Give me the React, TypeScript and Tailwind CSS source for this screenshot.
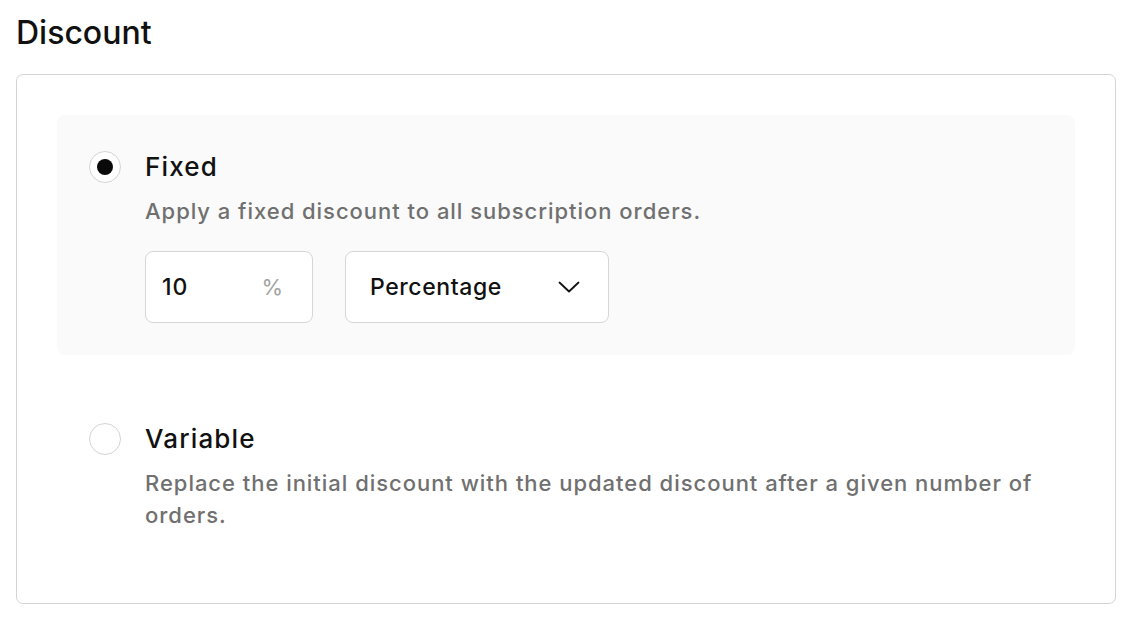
import { useState } from "react"

const font = { fontFamily: "Inter, 'Noto Sans', sans-serif" }

function Radio({ checked }: { checked: boolean }) {
  return (
    <div className="flex h-10 w-8 shrink-0 items-center">
      <div className="flex h-8 w-8 items-center justify-center rounded-full border border-[#d4d4d4] bg-white">
        {checked && <div className="h-4 w-4 rounded-full bg-[#0a0a0a]"></div>}
      </div>
    </div>
  )
}

export default function App() {
  const [mode, setMode] = useState("fixed")
  const [amount, setAmount] = useState("10")

  return (
    <div className="min-h-screen bg-white pl-4 pt-[13px]" style={font}>
      <h1 className="mb-[21px] text-[32px] leading-10 font-medium text-[#111111]">
        Discount
      </h1>

      <div className="w-[1100px] rounded-[7px] border border-[#d4d4d4] p-10">
        {/* Fixed */}
        <div
          onClick={() => setMode("fixed")}
          className={
            "flex gap-6 rounded-lg p-8 " +
            (mode === "fixed" ? "bg-[#fafafa]" : "bg-white")
          }
        >
          <Radio checked={mode === "fixed"} />
          <div className="flex flex-col">
            <div className="text-[26px] leading-10 font-medium tracking-[0.045em] text-[#111111]">
              Fixed
            </div>
            <p className="mt-2 text-[22px] leading-8 font-medium tracking-[0.044em] text-[#707070]">
              Apply a fixed discount to all subscription orders.
            </p>
            <div className="mt-6 flex gap-8">
              <div className="flex h-[72px] w-[168px] items-center justify-between rounded-lg border border-[#d6d6d6] bg-white pl-4 pr-7">
                <input
                  value={amount}
                  onChange={(e) => setAmount(e.target.value)}
                  className="w-16 bg-transparent text-[23px] font-medium tracking-[0.04em] text-[#111111] outline-none"
                />
                <span className="text-[22px] tracking-[0.04em] text-[#a3a3a3]">%</span>
              </div>
              <button className="flex h-[72px] w-[264px] items-center justify-between rounded-lg border border-[#d6d6d6] bg-white pl-6 pr-7">
                <span className="text-[23px] font-medium tracking-[0.026em] text-[#111111]">
                  Percentage
                </span>
                <svg width="22" height="12" viewBox="0 0 22 12" fill="none">
                  <path
                    d="M1.5 1.5 L11 10.5 L20.5 1.5"
                    stroke="#111111"
                    strokeWidth="1.8"
                    strokeLinecap="round"
                    strokeLinejoin="round"
                  />
                </svg>
              </button>
            </div>
          </div>
        </div>

        {/* Variable */}
        <div
          onClick={() => setMode("variable")}
          className={
            "mt-8 flex gap-6 rounded-lg p-8 " +
            (mode === "variable" ? "bg-[#fafafa]" : "bg-white")
          }
        >
          <Radio checked={mode === "variable"} />
          <div className="flex flex-col">
            <div className="text-[26px] leading-10 font-medium tracking-[0.045em] text-[#111111]">
              Variable
            </div>
            <p className="mt-2 text-[22px] leading-8 font-medium tracking-[0.044em] text-[#707070]">
              Replace the initial discount with the updated discount after a
              given number of orders.
            </p>
          </div>
        </div>
      </div>
    </div>
  )
}
